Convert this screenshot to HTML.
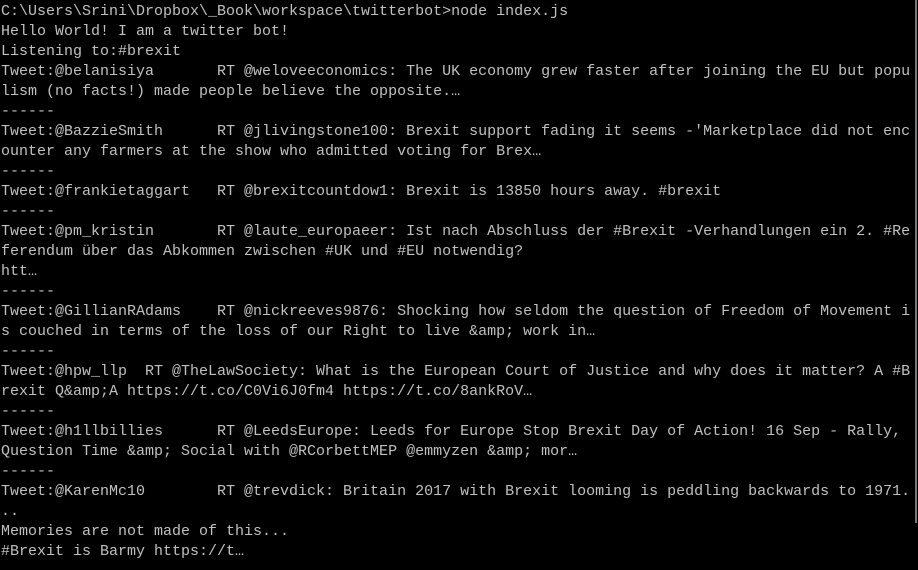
<!DOCTYPE html>
<html><head><meta charset="utf-8"><style>
html,body{margin:0;padding:0;background:#000;width:918px;height:570px;overflow:hidden}
pre{margin:0;padding:2px 0 0 1px;font-family:"Liberation Mono",monospace;font-size:15px;line-height:20px;color:#c0c0c0;white-space:pre;letter-spacing:0}
.b{position:absolute;left:915px;top:0;width:2px;height:523px;background:#777}
</style></head><body>
<pre>C:\Users\Srini\Dropbox\_Book\workspace\twitterbot>node index.js
Hello World! I am a twitter bot!
Listening to:#brexit
Tweet:@belanisiya       RT @weloveeconomics: The UK economy grew faster after joining the EU but popu
lism (no facts!) made people believe the opposite.…
------
Tweet:@BazzieSmith      RT @jlivingstone100: Brexit support fading it seems -'Marketplace did not enc
ounter any farmers at the show who admitted voting for Brex…
------
Tweet:@frankietaggart   RT @brexitcountdow1: Brexit is 13850 hours away. #brexit
------
Tweet:@pm_kristin       RT @laute_europaeer: Ist nach Abschluss der #Brexit -Verhandlungen ein 2. #Re
ferendum über das Abkommen zwischen #UK und #EU notwendig?
htt…
------
Tweet:@GillianRAdams    RT @nickreeves9876: Shocking how seldom the question of Freedom of Movement i
s couched in terms of the loss of our Right to live &amp;amp; work in…
------
Tweet:@hpw_llp  RT @TheLawSociety: What is the European Court of Justice and why does it matter? A #B
rexit Q&amp;amp;A https://t.co/C0Vi6J0fm4 https://t.co/8ankRoV…
------
Tweet:@h1llbillies      RT @LeedsEurope: Leeds for Europe Stop Brexit Day of Action! 16 Sep - Rally,
Question Time &amp;amp; Social with @RCorbettMEP @emmyzen &amp;amp; mor…
------
Tweet:@KarenMc10        RT @trevdick: Britain 2017 with Brexit looming is peddling backwards to 1971.
..
Memories are not made of this...
#Brexit is Barmy https://t…</pre>
<div class="b"></div>
</body></html>
